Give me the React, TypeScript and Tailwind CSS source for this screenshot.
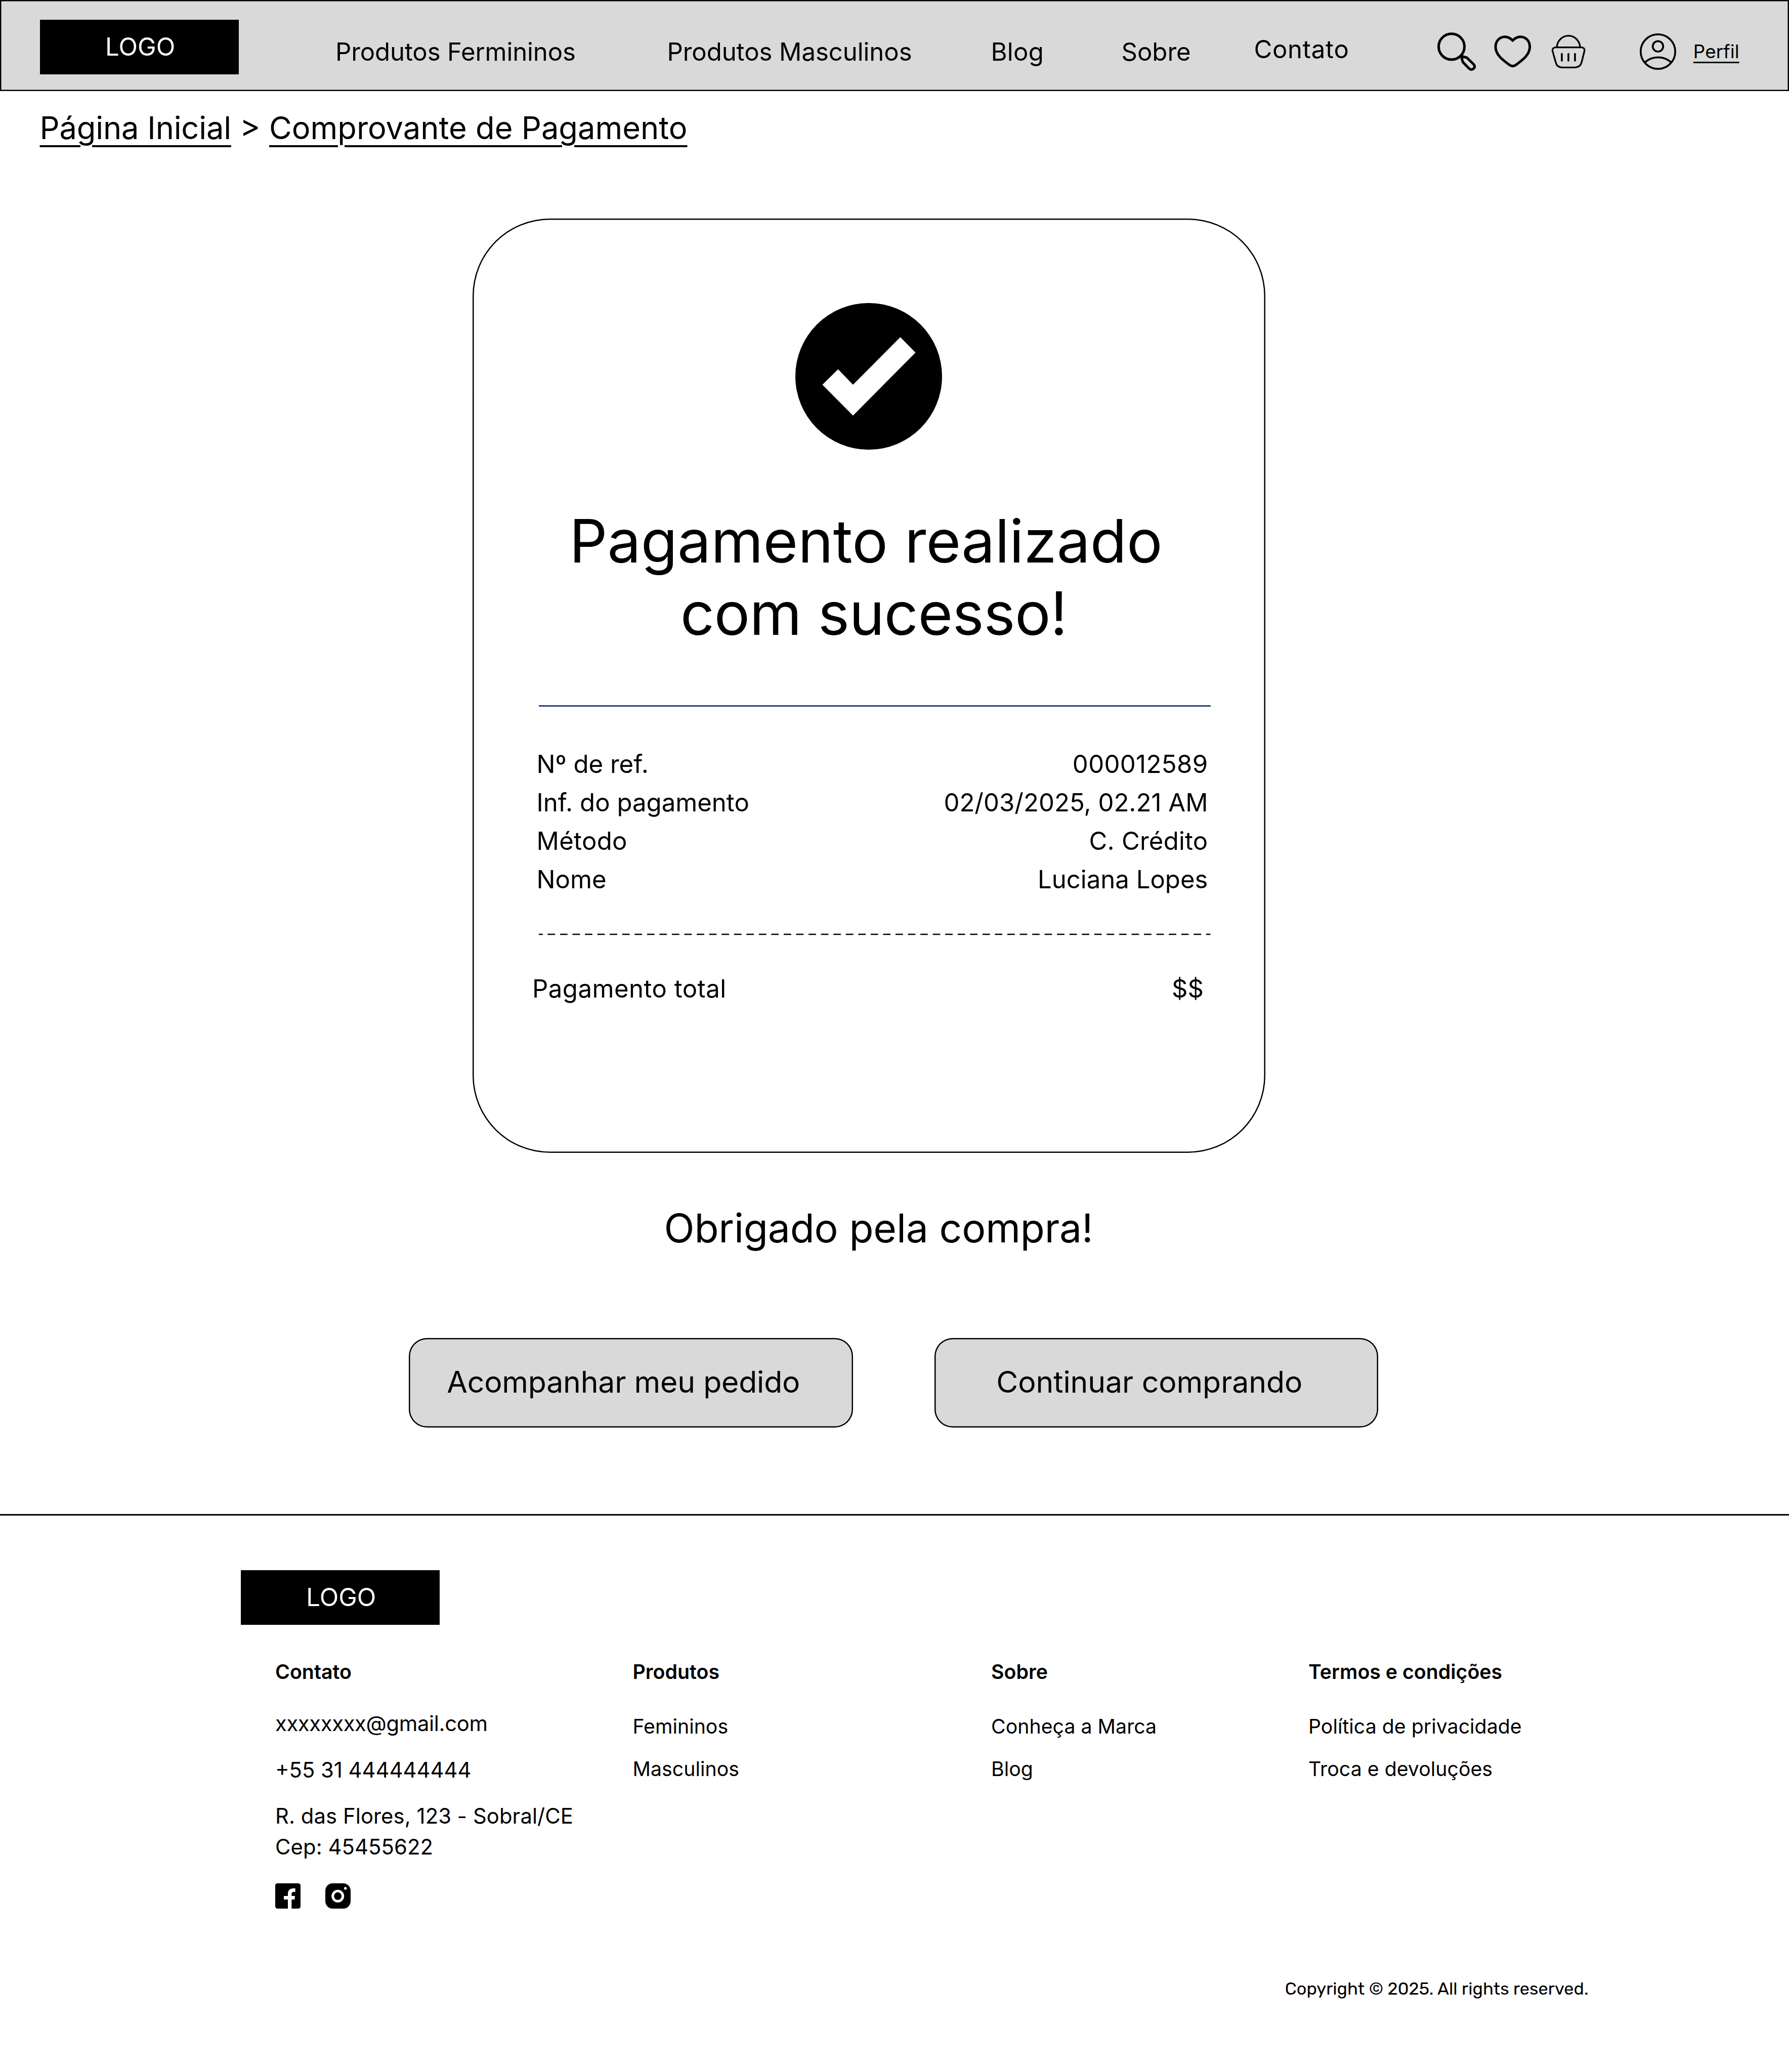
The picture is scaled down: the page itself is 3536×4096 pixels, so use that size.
import React from "react";

const receipt = [
  { label: "Nº de ref.", value: "000012589", labelClass: "", valueClass: "tracking-[0.35px]" },
  { label: "Inf. do pagamento", value: "02/03/2025, 02.21 AM", labelClass: "", valueClass: "" },
  { label: "Método", value: "C. Crédito", labelClass: "tracking-[0.3px]", valueClass: "tracking-[0.2px]" },
  { label: "Nome", value: "Luciana Lopes", labelClass: "", valueClass: "" },
];

const linkColumns = [
  { title: "Produtos", links: ["Femininos", "Masculinos"] },
  { title: "Sobre", links: ["Conheça a Marca", "Blog"] },
  { title: "Termos e condições", links: ["Política de privacidade", "Troca e devoluções"] },
];

function Logo() {
  return (
    <div className="h-[108.4px] w-[393.2px] bg-black pl-[129.5px] pt-[23.3px] text-[49.11px] leading-[60px] text-white">
      LOGO
    </div>
  );
}

function SearchIcon() {
  return (
    <svg className="h-[78px] w-[80px]" viewBox="30 38 240 234" fill="none" stroke="black" strokeWidth="15">
      <circle cx="117" cy="126" r="76.5" />
      <path d="M174 182L208 191L247 229Q260 243 249 255Q236 268 222 256L184 217Z" strokeLinejoin="round" />
    </svg>
  );
}

function HeartIcon() {
  return (
    <svg className="h-[68px] w-[76px]" viewBox="365 53 228 204" fill="none" stroke="black" strokeWidth="15">
      <path d="M478.500 89C466 76 450 67 432 67C401 67 377 93 377 127C377 172 417 203 461 235Q478.500 247 496 235C540 203 580 172 580 127C580 93 557 67 525 67C507 67 491 76 478.500 89Z" />
    </svg>
  );
}

function BasketIcon() {
  return (
    <svg className="h-[70px] w-[70px]" viewBox="705 51 210 210" fill="none" stroke="black" strokeWidth="10">
      <path d="M741 131C744 90 775 62 810 62C846 62 876 90 880 131" />
      <path d="M733 131H888Q908 133 905 153L888 220Q880 249 848 250H772Q742 249 735 220L716 153Q713 133 733 131Z" />
      <path d="M771 170V210M810 170V210M849 170V210" strokeWidth="11" strokeLinecap="round" />
    </svg>
  );
}

function UserIcon() {
  return (
    <svg className="h-[74px] w-[74px]" viewBox="1230 45 222 222" fill="none" stroke="black" strokeWidth="11">
      <circle cx="1341" cy="156" r="102.500" />
      <circle cx="1341" cy="125" r="31" />
      <path d="M1264 219A118 118 0 0 1 1419 219" />
    </svg>
  );
}

function Header() {
  return (
    <header className="flex h-[179.5px] items-start bg-[#d9d9d9] pl-[78.6px] text-[49.11px] leading-[60px] shadow-[inset_0_0_0_2.5px_#000]">
      <div className="w-[584.4px] pt-[39px]">
        <Logo />
      </div>
      <nav className="flex pt-[72.4px]">
        <a className="w-[655.4px] tracking-[-0.14px]">Produtos Fermininos</a>
        <a className="w-[640px] tracking-[-0.07px]">Produtos Masculinos</a>
        <a className="w-[258px] tracking-[0.3px]">Blog</a>
        <a className="w-[262px]">Sobre</a>
        <a className="-mt-[5px] w-[361.5px] tracking-[0.7px]">Contato</a>
      </nav>
      <div className="w-[111.700px] pt-[62.7px]"><SearchIcon /></div>
      <div className="w-[113.300px] pt-[67.7px]"><HeartIcon /></div>
      <div className="w-[175px] pt-[67px]"><BasketIcon /></div>
      <div className="w-[107px] pt-[65px]"><UserIcon /></div>
      <a className="pt-[79.4px] text-[36.83px] leading-[45px] underline decoration-[2.5px] underline-offset-[7.4px]">Perfil</a>
    </header>
  );
}

function ReceiptCard() {
  return (
    <section className="ml-[933.5px] mt-[142.5px] h-[1847px] w-[1567px] rounded-[153px] pt-[167px] shadow-[inset_0_0_0_2.5px_#000]">
      <svg className="mx-auto block h-[290px] w-[290px]" viewBox="0 0 290 290">
        <circle cx="145" cy="145" r="145" />
        <path d="M53.500 161.500L84.500 131L114 161.500L207.500 67.500L237.500 98L114 222.500Z" fill="white" />
      </svg>
      <h1 className="mt-[109px] text-center text-[117.87px] leading-[142.6px]">
        <span className="block pr-[11px]">Pagamento realizado</span>
        <span className="block pl-[20px] tracking-[-0.55px]">com sucesso!</span>
      </h1>
      <div className="ml-[131.5px] mt-[110.5px] h-[3px] w-[1327.5px] bg-[#244a7f]" />
      <dl className="ml-[127px] mt-[75px] w-[1327px] text-[49.11px] leading-[76px]">
        {receipt.map((row) => (
          <div key={row.label} className="flex justify-between">
            <dt className={row.labelClass}>{row.label}</dt>
            <dd className={row.valueClass}>{row.value}</dd>
          </div>
        ))}
      </dl>
      <svg className="ml-[131.5px] mt-[69px] block h-[4px] w-[1327.5px]" viewBox="0 0 1327.5 4">
        <path d="M0 2H1327.5" stroke="black" strokeWidth="2.46" strokeDasharray="14.733 9.822" strokeDashoffset="7.1" />
      </svg>
      <div className="ml-[118.500px] mt-[67px] flex w-[1327px] justify-between text-[49.11px] leading-[76px]">
        <span className="tracking-[0.45px]">Pagamento total</span>
        <span>$$</span>
      </div>
    </section>
  );
}

function Footer() {
  return (
    <footer className="mt-[171px] border-t-[3px] border-black pl-[475.8px] pt-[108px]">
      <Logo />
      <div className="ml-[68.2px] mt-[69px] grid h-[492.5px] grid-cols-[706.5px_708.5px_627px_600px] text-[39.29px] leading-[48px]">
        <div>
          <h2 className="font-semibold">Contato</h2>
          <div className="mt-[48px] flex flex-col gap-[31.1px] text-[41.75px] leading-[60.4px]">
            <p className="tracking-[-0.35px]">xxxxxxxx@gmail.com</p>
            <p>+55 31 444444444</p>
            <p className="tracking-[0.08px]">
              R. das Flores, 123 - Sobral/CE
              <br />
              Cep: 45455622
            </p>
          </div>
          <div className="mt-[41.8px] flex gap-[48.6px]">
            <svg className="h-[50px] w-[50px]" viewBox="0 0 150 150">
              <rect width="150" height="150" rx="14" />
              <path d="M75 152V96H51V75H75V64C75 42 87 30 108 30H119V51H108Q97 51 97 62V75H117L115 96H97V152Z" fill="white" />
            </svg>
            <svg className="h-[50px] w-[50px]" viewBox="0 0 150 150">
              <rect width="150" height="150" rx="44" />
              <circle cx="74" cy="76" r="30" fill="none" stroke="white" strokeWidth="15" />
              <circle cx="119" cy="30" r="8" fill="white" />
            </svg>
          </div>
        </div>
        {linkColumns.map((column) => (
          <div key={column.title}>
            <h2 className="font-semibold">{column.title}</h2>
            <ul className="mt-[60px] flex flex-col gap-[35.5px]">
              {column.links.map((link) => (
                <li key={link}>{link}</li>
              ))}
            </ul>
          </div>
        ))}
      </div>
      <p className="ml-[2064px] mt-[138.6px] font-['Rubik','Roboto',sans-serif] text-[34.38px] leading-[40px]">
        Copyright © 2025. All rights reserved.
      </p>
    </footer>
  );
}

export default function App() {
  return (
    <div className="h-[4096px] w-[3536px] overflow-hidden bg-white font-['Inter',sans-serif] text-black">
      <Header />
      <p className="ml-[78.6px] mt-[36px] text-[61.39px] leading-[74px]">
        <a className="tracking-[-0.2px] underline decoration-[4.4px] underline-offset-[12px]">Página Inicial</a>
        {" > "}
        <a className="underline decoration-[4.4px] underline-offset-[12px]">Comprovante de Pagamento</a>
      </p>
      <ReceiptCard />
      <p className="ml-[1312.5px] mt-[101px] text-[78.58px] leading-[95px] tracking-[-0.2px]">Obrigado pela compra!</p>
      <div className="ml-[808px] mt-[169.5px] flex gap-[161px] text-[58.93px] leading-[74px]">
        <button className="h-[177.5px] w-[877.5px] rounded-[36px] bg-[#d9d9d9] pb-[2px] pr-[29px] text-center tracking-[-0.2px] shadow-[inset_0_0_0_2.5px_#000]">
          Acompanhar meu pedido
        </button>
        <button className="h-[177.5px] w-[877.5px] rounded-[36px] bg-[#d9d9d9] pb-[2px] pr-[27px] text-center tracking-[-0.07px] shadow-[inset_0_0_0_2.5px_#000]">
          Continuar comprando
        </button>
      </div>
      <Footer />
    </div>
  );
}
